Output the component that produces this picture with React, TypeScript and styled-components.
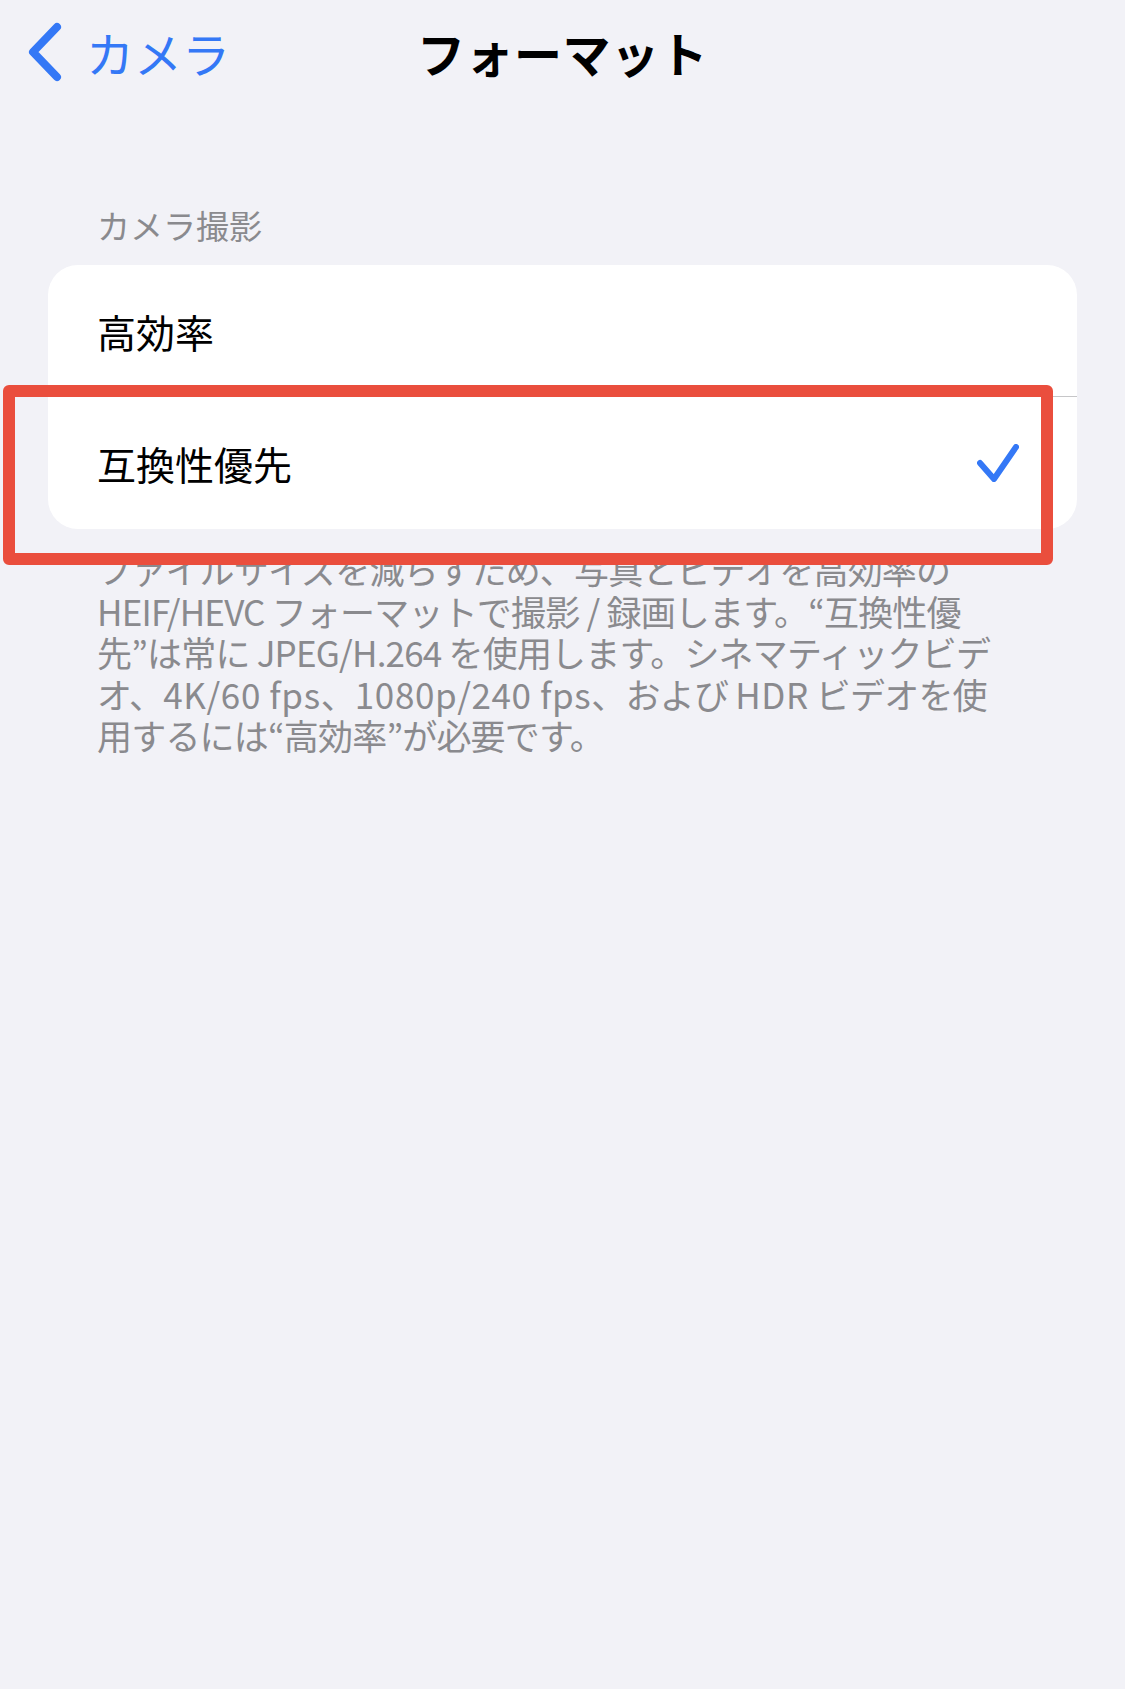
import React from "react";
import styled, { createGlobalStyle } from "styled-components";

const GlobalStyle = createGlobalStyle`
  html, body {
    margin: 0;
    padding: 0;
    background-color: #f2f2f7;
  }
  body {
    font-family: "Noto Sans CJK JP", "Noto Sans", sans-serif;
    -webkit-font-smoothing: antialiased;
  }
`;

const palette = {
  background: "#f2f2f7",
  blue: "#3478f6",
  label: "#000000",
  secondary: "#8a8a8e",
  separator: "#c6c6c8",
  highlight: "#ea4e3d",
};

const Page = styled.div`
  min-height: 1689px;
  background-color: ${palette.background};
`;

const NavBar = styled.header`
  height: 104px;
  display: grid;
  grid-template-columns: 1fr auto 1fr;
  align-items: center;
`;

const BackButton = styled.div`
  display: flex;
  align-items: center;
  gap: 22px;
  padding-left: 26px;
  color: ${palette.blue};
  font-size: 48px;
  line-height: 58px;
  cursor: pointer;
  svg {
    display: block;
  }
`;

const Title = styled.h1`
  margin: 0;
  font-size: 48px;
  font-weight: 700;
  line-height: 58px;
  color: ${palette.label};
  letter-spacing: 0.5px;
`;

const SectionHeader = styled.div`
  padding: 101px 0 20px 97px;
  font-size: 33px;
  line-height: 40px;
  color: ${palette.secondary};
`;

const Card = styled.div`
  margin: 0 48px;
  background-color: #ffffff;
  border-radius: 30px;
`;

const Row = styled.div<{ $separator?: boolean }>`
  position: relative;
  height: 132px;
  display: flex;
  align-items: center;
  justify-content: space-between;
  padding: 0 58px 0 49px;
  font-size: 39px;
  line-height: 50px;
  color: ${palette.label};
  ${({ $separator }) =>
    $separator &&
    `
    &::after {
      content: "";
      position: absolute;
      left: 49px;
      right: 0;
      bottom: 0;
      height: 1px;
      background-color: ${palette.separator};
    }
  `}
`;

const Highlight = styled.div`
  position: absolute;
  left: -45px;
  top: -12px;
  width: 1050px;
  height: 180px;
  box-sizing: border-box;
  border: 12px solid ${palette.highlight};
  border-radius: 6px;
  pointer-events: none;
  z-index: 2;
`;

const Footer = styled.p`
  margin: 0;
  padding: 19px 0 0 97px;
  font-size: 35px;
  line-height: 41.6px;
  letter-spacing: -0.8px;
  color: ${palette.secondary};
  white-space: nowrap;
`;

const Latin = styled.span`
  letter-spacing: 0.6px;
`;

const Chevron = () => (
  <svg width="38" height="60" viewBox="0 0 38 60">
    <path
      d="M31 5 L7 30 L31 55"
      fill="none"
      stroke={palette.blue}
      strokeWidth="8"
      strokeLinecap="round"
      strokeLinejoin="round"
    />
  </svg>
);

const Checkmark = () => (
  <svg width="42" height="38" viewBox="0 0 42 38">
    <path
      d="M3 19 L17 35 L39 3"
      fill="none"
      stroke={palette.blue}
      strokeWidth="6"
      strokeLinecap="round"
      strokeLinejoin="round"
    />
  </svg>
);

const App: React.FC = () => {
  return (
    <Page>
      <GlobalStyle />
      <NavBar>
        <BackButton>
          <Chevron />
          <span>カメラ</span>
        </BackButton>
        <Title>フォーマット</Title>
        <div />
      </NavBar>
      <SectionHeader>カメラ撮影</SectionHeader>
      <Card>
        <Row $separator>
          <span>高効率</span>
        </Row>
        <Row>
          <span>互換性優先</span>
          <Checkmark />
          <Highlight />
        </Row>
      </Card>
      <Footer>
        ファイルサイズを減らすため、写真とビデオを高効率の
        <br />
        HEIF/HEVC フォーマットで撮影 / 録画します。“互換性優
        <br />
        先”は常に JPEG/H.264 を使用します。シネマティックビデ
        <br />
        オ、<Latin>4K/60 fps</Latin>、<Latin>1080p/240 fps</Latin>、および{" "}
        <Latin>HDR</Latin> ビデオを使
        <br />
        用するには“高効率”が必要です。
      </Footer>
    </Page>
  );
};

export default App;
